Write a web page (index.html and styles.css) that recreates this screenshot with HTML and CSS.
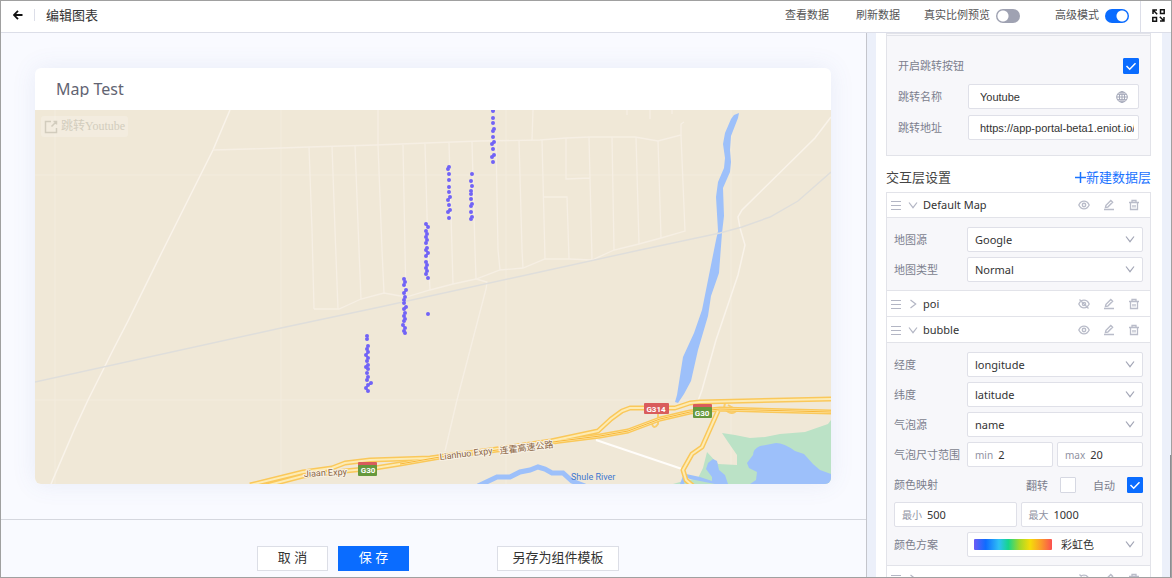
FILE: index.html
```html
<!DOCTYPE html>
<html lang="zh-CN">
<head>
<meta charset="utf-8">
<title>编辑图表</title>
<link rel="stylesheet" href="styles.css">
</head>
<body>
<svg class="defs" aria-hidden="true">
  <symbol id="i-drag" viewBox="0 0 10 10"><path d="M0 1.500h10M0 5.500h10M0 9.500h10" fill="none" stroke="currentColor"/></symbol>
  <symbol id="i-down" viewBox="0 0 10 10"><path d="M1 2.500l4 5.200 4-5.200" fill="none" stroke="currentColor" stroke-width="1.200"/></symbol>
  <symbol id="i-right" viewBox="0 0 10 10"><path d="M2.500 1l5.200 4-5.200 4" fill="none" stroke="currentColor" stroke-width="1.200"/></symbol>
  <symbol id="i-eye" viewBox="0 0 12 12"><path d="M.8 6C2 3.500 3.800 2.200 6 2.200S10 3.500 11.200 6C10 8.500 8.200 9.800 6 9.800S2 8.500.8 6z" fill="none" stroke="currentColor" stroke-width="1.300"/><circle cx="6" cy="6" r="1.700" fill="none" stroke="currentColor" stroke-width="1.400"/></symbol>
  <symbol id="i-eye-off" viewBox="0 0 12 12"><path d="M.8 6C2 3.500 3.800 2.200 6 2.200S10 3.500 11.200 6C10 8.500 8.200 9.800 6 9.800S2 8.500.8 6zM1.500 1.500l9 9" fill="none" stroke="currentColor" stroke-width="1.300"/><circle cx="6" cy="6" r="1.700" fill="none" stroke="currentColor" stroke-width="1.200"/></symbol>
  <symbol id="i-edit" viewBox="0 0 12 12"><path d="M2.500 8.500L3 6.300 7.800 1.500 9.600 3.300 4.800 8.100zM1 10.500h10" fill="none" stroke="currentColor" stroke-width="1.400"/></symbol>
  <symbol id="i-trash" viewBox="0 0 12 12"><path d="M1 3.500h10M2.500 3.500v7h7v-7M4 3.200V1.500h4v1.700M5 6v2.500M7 6v2.500" fill="none" stroke="currentColor" stroke-width="1.300"/></symbol>
</svg>
<div class="app">
  <header class="topbar">
    <button class="icon-btn back" aria-label="返回"><svg width="10" height="10" viewBox="0 0 10 10"><path d="M9.500 5H1.200M5 .8L1 5l4 4.200" fill="none" stroke="#111" stroke-width="1.800"/></svg></button>
    <h1 class="topbar-title">编辑图表</h1>
    <nav class="topbar-actions">
      <button class="link-btn">查看数据</button>
      <button class="link-btn">刷新数据</button>
      <label class="switch-label">真实比例预览<input class="switch" type="checkbox" role="switch"></label>
      <label class="switch-label advanced">高级模式<input class="switch" type="checkbox" role="switch" checked></label>
    </nav>
    <button class="icon-btn expand" aria-label="全屏"><svg width="13" height="13" viewBox="0 0 13 13" fill="none" stroke="#111" stroke-width="1.500"><path d="M8.500.8h3.700v3.700H8.500zM.8 8.500h3.700v3.700H.8zM1 5V1h4M1 1l4.200 4.200M12 8v4H8M12 12L7.800 7.800"/></svg></button>
  </header>

  <div class="workspace">
    <main class="editor">
      <section class="stage">
        <article class="card">
          <h2 class="card-title">Map Test</h2>
          <div class="map">
            <svg class="map-svg" viewBox="35 110 796 374" preserveAspectRatio="xMidYMid slice" role="img" aria-label="Map">
              <rect x="35" y="110" width="796" height="374" fill="#f0e8d7"/>
              <path class="tiles" d="M55 110V484M281 110V484M506 110V484M731 110V484M35 175H831M35 400H831"/>
              <path fill="#bbe2c6" d="M722 433L735 435 750 438 765 437 780 434 805 432 828 424 831 420V484H673L680 482 698 478 703 468 707 452 718 464 737 465V455L728 442z"/>
              <path fill="#9dc0fa" d="M831 474L820 470 813 464 804 454 795 451Q784 443 776 443L760 446Q753 449 753 455L747 463 749 468 757 472 756 480 750 484H831zM713 459L717 461 719 470 725 475 728 484H715L690 479 683 476 680 484H684L686 474 700 477 712 481 712 477 706 469 708 463z"/>
              <g class="roads">
                <path class="strong" d="M230 110L213 150 190 196 162 252 128 321 113 350 88 400 75 428 51 484"/>
                <path d="M213 150L281 148 309 147 376 145 426 143 480 141 540 140 566 138 590 137H635L658 141 681 135V124L684 122"/>
                <path d="M314 309H339L361 299 384 293 406 297 430 290 453 284 476 279 500 270 523 268 545 259H569L592 260 614 250 639 244 661 238 685 231 681 135"/>
                <path d="M309 147L312 230 314 309M332 146L335 230 338 309M355 145L359 250 361 299M378 110V145L382 250 384 293M403 145L405 250 406 297M425 144L428 250 430 290M449 143L452 250 453 284M472 142L475 250 476 279M496 141L498 250 500 270M519 140L522 250 523 268M542 140L545 259M566 138V179L590 178M544 197H567L569 259M589 137L592 260M612 137L614 250M636 137L639 244M658 141L661 238M533 110L532 140M627 110V115M650 110V119M672 110V114"/>
                <path d="M476 279L487 282 486 289 457 400 445 451"/>
                <path class="strong" d="M831 117L815 138 742 210 738 217 740 228 745 245 738 275 716 340 702 390 698 401"/>
              </g>
              <path fill="#9dc0fa" d="M739 113L738 118 731 136 730 150 731 162 730 172 723 188 724 216 722 233 719 273 711 296 708 316 698 350 691 381 684 394 678 403 675 402 677 395 683 357 694 333 702 310 709 275 716 240 718 231 716 197 718 182 724 168 725 158 723 144 725 133 731 119 734 115z"/>
              <path class="railway" d="M35 382L281 328 380 307 540 272 640 250 720 233 742 227 770 217 798 201 831 172"/>
              <path class="stream" d="M478 486L497 477H510L520 472 530 470 538 467 545 469 552 473H563L572 481 585 486"/>
              <path d="M596 440L682 469" stroke="#fffdfa" stroke-width="2"/>
              <path class="ramp" d="M658 409V424Q654 430 652 424M725 403L724 408Q732 417 737 410L728 405"/>
              <g class="hw hw-edge">
                <path d="M250 485L303 472 332 468 345 463 370 460 430 458 490 450 551 441 598 431 611 419 622 411 630 408H675L690 403 700 402 831 399"/>
                <path d="M265 486L303 476 345 471 375 468 400 464 440 457 490 451 560 441 600 436 628 431 660 419 690 412 720 409 831 412"/>
                <path d="M718 411L702 447 692 454 683 470 686 480 693 486"/>
              </g>
              <g class="hw hw-fill">
                <path d="M250 485L303 472 332 468 345 463 370 460 430 458 490 450 551 441 598 431 611 419 622 411 630 408H675L690 403 700 402 831 399"/>
                <path d="M265 486L303 476 345 471 375 468 400 464 440 457 490 451 560 441 600 436 628 431 660 419 690 412 720 409 831 412"/>
                <path d="M718 411L702 447 692 454 683 470 686 480 693 486"/>
              </g>
              <path class="hw-line" d="M400 464L440 457 490 451 560 441 600 436 628 431 660 419 690 412 720 409 831 412"/>
              <g class="bubbles">
                <path d="M493 111h0M493 118h0M493 123h0M494 129h0M493 131h0M493 137h0M494 142h0M492 144h0M493 149h0M494 155h0M492 157h0M493 162h0"/>
                <path d="M449 167h0M448 169h0M449 174h0M449 180h0M449 187h0M449 192h0M450 197h0M448 200h0M449 205h0M450 210h0M448 212h0M449 218h0"/>
                <path d="M472 174h0M471 181h0M472 186h0M471 191h0M471 194h0M471 199h0M472 204h0M471 206h0M471 212h0M472 217h0M471 219h0"/>
                <path d="M426 224h0M428 227h0M426 231h0M427 234h0M426 237h0M427 240h0M426 243h0M427 248h0M426 250h0M428 253h0M426 256h0M426 262h0M427 265h0M426 268h0M427 271h0M426 274h0M428 278h0"/>
                <path d="M404 279h0M405 282h0M404 285h0M406 290h0M404 293h0M405 297h0M404 300h0M404 303h0M406 307h0M404 309h0M405 313h0M404 316h0M405 319h0M404 321h0M403 325h0M405 328h0M404 331h0M405 333h0M428 314h0"/>
                <path d="M367 336h0M367 339h0M368 346h0M367 349h0M368 352h0M366 355h0M368 358h0M367 361h0M368 365h0M366 367h0M368 369h0M367 373h0M368 377h0M367 380h0M371 383h0M368 385h0M366 388h0M368 391h0"/>
              </g>
              <g class="road-label">
                <text transform="translate(304 477) rotate(-3)">Jiaan Expy</text>
                <text transform="translate(440 460) rotate(-7)">Lianhuo Expy</text>
                <text transform="translate(500 454) rotate(-7)">连霍高速公路</text>
              </g>
              <text class="river-label" x="571" y="480">Shule River</text>
              <g class="shield">
                <rect x="644" y="403" width="25" height="11" rx="1" fill="#d95c5c"/><text x="656" y="412">G314</text>
                <rect x="358" y="462" width="19" height="5" rx="1" fill="#d95c5c"/><rect x="358" y="465" width="19" height="11" rx="1" fill="#66983c"/><text x="368" y="473">G30</text>
                <rect x="693" y="404" width="19" height="5" rx="1" fill="#d95c5c"/><rect x="693" y="407" width="19" height="11" rx="1" fill="#66983c"/><text x="702" y="416">G30</text>
              </g>
            </svg>
            <button class="jump-btn"><svg width="14" height="14" viewBox="0 0 14 14" fill="none" stroke="currentColor" stroke-width="1.500"><path d="M7 1.500H1.500v11h11V8M9.500 1.500h3v3M12.500 1.500L7.500 6.500"/></svg>跳转Youtube</button>
          </div>
        </article>
      </section>
      <footer class="actions">
        <button class="btn">取 消</button>
        <button class="btn primary">保 存</button>
        <button class="btn template">另存为组件模板</button>
      </footer>
    </main>

    <aside class="sidebar">
      <div class="panel">
        <section class="jump-box">
          <div class="row"><label for="jump-on">开启跳转按钮</label><input class="check push" id="jump-on" type="checkbox" checked></div>
          <div class="row"><label for="jump-name">跳转名称</label>
            <div class="field wide"><input id="jump-name" type="text" value="Youtube"><svg class="globe" width="12" height="12" viewBox="0 0 12 12" fill="none" stroke="#a3a7b8"><circle cx="6" cy="6" r="5.300"/><ellipse cx="6" cy="6" rx="2.600" ry="5.300"/><path d="M6 .7v10.600M.7 6h10.600M1.500 3.300h9M1.500 8.700h9"/></svg></div></div>
          <div class="row"><label for="jump-url">跳转地址</label><div class="field wide url"><input id="jump-url" type="text" value="https://app-portal-beta1.eniot.io/"></div></div>
        </section>

        <div class="layers-head"><h3>交互层设置</h3><button class="add-btn"><svg width="11" height="11" viewBox="0 0 11 11"><path d="M5.500 0v11M0 5.500h11" stroke="currentColor" stroke-width="1.500"/></svg>新建数据层</button></div>

        <section class="layers">
          <div class="layer-head"><svg class="ic drag"><use href="#i-drag"/></svg><svg class="ic"><use href="#i-down"/></svg><h4>Default Map</h4>
            <button class="tool" aria-label="显示"><svg><use href="#i-eye"/></svg></button><button class="tool" aria-label="编辑"><svg><use href="#i-edit"/></svg></button><button class="tool" aria-label="删除"><svg><use href="#i-trash"/></svg></button></div>
          <div class="layer-body">
            <div class="row"><label for="src">地图源</label><div class="field"><select id="src"><option>Google</option></select><svg class="caret"><use href="#i-down"/></svg></div></div>
            <div class="row"><label for="type">地图类型</label><div class="field"><select id="type"><option>Normal</option></select><svg class="caret"><use href="#i-down"/></svg></div></div>
          </div>
          <div class="layer-head"><svg class="ic drag"><use href="#i-drag"/></svg><svg class="ic"><use href="#i-right"/></svg><h4>poi</h4>
            <button class="tool" aria-label="显示"><svg><use href="#i-eye-off"/></svg></button><button class="tool" aria-label="编辑"><svg><use href="#i-edit"/></svg></button><button class="tool" aria-label="删除"><svg><use href="#i-trash"/></svg></button></div>
          <div class="layer-head"><svg class="ic drag"><use href="#i-drag"/></svg><svg class="ic"><use href="#i-down"/></svg><h4>bubble</h4>
            <button class="tool" aria-label="显示"><svg><use href="#i-eye"/></svg></button><button class="tool" aria-label="编辑"><svg><use href="#i-edit"/></svg></button><button class="tool" aria-label="删除"><svg><use href="#i-trash"/></svg></button></div>
          <div class="layer-body">
            <div class="row"><label for="lng">经度</label><div class="field"><select id="lng"><option>longitude</option></select><svg class="caret"><use href="#i-down"/></svg></div></div>
            <div class="row"><label for="lat">纬度</label><div class="field"><select id="lat"><option>latitude</option></select><svg class="caret"><use href="#i-down"/></svg></div></div>
            <div class="row"><label for="bsrc">气泡源</label><div class="field"><select id="bsrc"><option>name</option></select><svg class="caret"><use href="#i-down"/></svg></div></div>
            <div class="row"><span class="label">气泡尺寸范围</span><div class="pair"><label class="field num">min<input type="text" value="2"></label><label class="field num">max<input type="text" value="20"></label></div></div>
            <div class="row"><span class="label">颜色映射</span><label class="inline push">翻转<input class="check" type="checkbox"></label><label class="inline">自动<input class="check" type="checkbox" checked></label></div>
            <div class="row"><div class="pair"><label class="field num">最小<input type="text" value="500"></label><label class="field num">最大<input type="text" value="1000"></label></div></div>
            <div class="row"><label for="scheme">颜色方案</label><div class="field"><span class="swatch"></span><select id="scheme"><option>彩虹色</option></select><svg class="caret"><use href="#i-down"/></svg></div></div>
          </div>
          <div class="layer-head"><svg class="ic drag"><use href="#i-drag"/></svg><svg class="ic"><use href="#i-right"/></svg><h4></h4>
            <button class="tool" aria-label="显示"><svg><use href="#i-eye-off"/></svg></button><button class="tool" aria-label="编辑"><svg><use href="#i-edit"/></svg></button><button class="tool" aria-label="删除"><svg><use href="#i-trash"/></svg></button></div>
        </section>
      </div>
      <span class="scroll-thumb"></span>
    </aside>
  </div>
</div>
</body>
</html>
```

FILE: styles.css
```css
* { box-sizing: border-box; }
body {
  margin: 0;
  font-family: "Noto Sans", "Noto Sans CJK SC", sans-serif;
  font-size: 11px;
  color: #333;
}
h1, h2, h3, h4 { margin: 0; font-weight: 400; }
button, input, select { font: inherit; color: inherit; margin: 0; }
button { padding: 0; border: 0; background: none; cursor: pointer; }
svg { display: block; flex: none; }
.defs { position: absolute; width: 0; height: 0; }

.app {
  display: flex;
  flex-direction: column;
  height: 100vh;
  overflow: hidden;
  border: 1px solid #a0a0a0;
  background: #f9faff;
}

.topbar {
  display: flex;
  align-items: center;
  flex: none;
  height: 32px;
  padding-bottom: 4px;
  background: #fff;
  border-bottom: 1px solid #dcdee8;
}
.icon-btn { display: flex; align-items: center; justify-content: center; }
.back { width: 34px; height: 12px; border-right: 1px solid #dcdee8; }
.topbar-title { margin-left: 11px; font-size: 13px; line-height: 20px; }
.topbar-actions { display: flex; align-items: center; gap: 27px; margin-left: auto; margin-right: 11px; }
.link-btn { color: #555; line-height: 16px; }
.switch-label { display: flex; align-items: center; gap: 6px; color: #555; line-height: 16px; }
.link-btn + .switch-label { margin-left: -3px; }
.advanced { margin-left: 8px; }
.switch {
  appearance: none;
  width: 24px;
  height: 14px;
  margin-top: 2px;
  border-radius: 7px;
  background: radial-gradient(circle at 7px 7px, #fff 5px, transparent 6px) #9fa2b2;
}
.switch:checked { background: radial-gradient(circle at 17px 7px, #fff 5px, transparent 6px) #0a6cff; }
.expand { align-self: flex-start; flex: none; width: 31px; height: 31px; padding: 0 0 2px 4px; border-left: 1px solid #dcdee8; }

.workspace { display: flex; flex: 1; min-height: 0; }
.editor { display: flex; flex-direction: column; flex: 1; min-width: 0; border-right: 1px solid #c4c5cc; }
.stage { display: flex; flex: 1; min-height: 0; padding: 35px 35px 35px 34px; }
.card {
  display: flex;
  flex-direction: column;
  flex: 1;
  overflow: hidden;
  border-radius: 6px;
  background: #fff;
  box-shadow: 0 0 24px rgba(80, 110, 180, .1);
}
.card-title {
  height: 29px;
  margin: 0 21px 13px;
  padding-top: 10px;
  overflow: hidden;
  color: #626472;
  font-size: 16px;
  line-height: 22px;
  flex: none;
}
.map { position: relative; flex: 1; min-height: 0; }
.map-svg { width: 100%; height: 100%; }
.jump-btn {
  position: absolute;
  top: 6px;
  left: 6px;
  display: flex;
  align-items: center;
  gap: 3px;
  padding: 0 3px;
  border-radius: 3px;
  background: rgba(255, 255, 255, .2);
  color: #d2ccbd;
  font: 12px/21px "Liberation Serif", "Noto Sans CJK SC", serif;
}
.tiles { fill: none; stroke: #f3ecde; }
.roads { fill: none; stroke: #f6efe4; stroke-width: 1.300; }
.strong { stroke: #f9f3ea; stroke-width: 1.500; }
.railway { fill: none; stroke: #dfdedb; stroke-width: 1.400; }
.stream { fill: none; stroke: #9dc0fa; stroke-width: 5; }
.ramp { fill: none; stroke: #f9cd6c; stroke-width: 2; }
.hw { fill: none; stroke-linejoin: round; }
.hw-edge { stroke: #fac85a; stroke-width: 5; }
.hw-fill { stroke: #fdebb4; stroke-width: 2; }
.hw-line { fill: none; stroke: #f8b637; stroke-width: 1; }
.bubbles { fill: none; stroke: #7163f6; stroke-width: 4; stroke-linecap: round; }
.road-label, .river-label { font-family: Roboto, "Noto Sans CJK SC", sans-serif; font-size: 9px; }
.road-label { fill: #8a6444; stroke: #f8f2e6; stroke-width: 2; paint-order: stroke; }
.river-label { fill: #3f77cf; }
.shield text { fill: #fff; font: 700 8px Roboto, sans-serif; text-anchor: middle; }

.actions {
  display: flex;
  gap: 10px;
  flex: none;
  height: 58px;
  padding: 26px 0 0 256px;
  border-top: 1px solid #d5d7de;
}
.btn { width: 71px; height: 25px; padding-bottom: 3px; border: 1px solid #dcdee6; background: #fff; font-size: 13px; line-height: 20px; }
.primary { border-color: #0a6cff; background: #0a6cff; color: #fff; }
.template { width: 122px; margin-left: 78px; }

.sidebar { position: relative; flex: 0 0 304px; padding: 0 9px; overflow: hidden; background: #ecf0fa; }
.panel { padding: 0 11px 0 10px; background: #fff; }
.scroll-thumb { position: absolute; right: 0; top: 422px; bottom: 0; width: 1px; background: #8c8d92; }
.jump-box {
  padding: 17px 11px 15px;
  border: 1px solid #e2e3e9;
  border-top: 3px double #e2e3e9;
  background: #f7f7fa;
  display: grid;
  gap: 6px;
}
.row { display: flex; align-items: center; height: 25px; color: #7c7f8e; }
.row > label:first-child, .label { flex: 0 0 auto; line-height: 16px; min-width: 73px; }
.jump-box .row > label:first-child { min-width: 70px; }
.row > .push, .push { margin-left: auto; }
.field {
  position: relative;
  display: flex;
  align-items: center;
  flex: 1;
  min-width: 0;
  height: 25px;
  border: 1px solid #dfe0e8;
  border-radius: 2px;
  background: #fff;
}
.field input, .field select {
  appearance: none;
  flex: 1;
  min-width: 0;
  width: 100%;
  height: 23px;
  padding: 0 7px;
  border: 0;
  background: none;
  color: #333;
}
.wide { padding: 0 10px 0 11px; }
.wide input { padding: 0; font-family: "Liberation Sans", sans-serif; }
.url { padding-right: 4px; }
.caret { position: absolute; right: 7px; top: 6px; width: 10px; height: 10px; color: #a3a6b6; pointer-events: none; }
.num { padding-left: 7px; color: #8f92a2; font-size: 10px; }
.num input { padding: 0 5px; font-size: 11px; }
.pair { display: flex; flex: 1; gap: 4px; min-width: 0; }
.check {
  appearance: none;
  width: 16px;
  height: 16px;
  border: 1px solid #d6d8e2;
  border-radius: 1px;
  background: #fff;
}
.check:checked {
  border-color: #0a6cff;
  background: #0a6cff url("data:image/svg+xml,%3Csvg xmlns='http://www.w3.org/2000/svg' viewBox='0 0 14 14'%3E%3Cpath d='M2.500 7l3.200 3.200L11.500 4.200' fill='none' stroke='white' stroke-width='1.500'/%3E%3C/svg%3E");
}
.inline { display: flex; align-items: center; gap: 12px; }
.inline + .inline { margin-left: 17px; }
.swatch {
  flex: none;
  width: 78px;
  height: 11px;
  margin: 0 2px 0 6px;
  border-radius: 1px;
  background: linear-gradient(90deg, #6c5cf5, #0f6cff 15%, #2fc0f5 32%, #16d58c 44%, #a0d82a 58%, #f5dc0a 72%, #fb9b2a 86%, #fb5050);
}

.layers-head { display: flex; justify-content: space-between; align-items: center; height: 36px; padding-top: 6px; }
.layers-head h3 { font-size: 13px; line-height: 18px; color: #444; }
.add-btn { display: flex; align-items: center; color: #1a73ff; font-size: 13px; line-height: 18px; }
.layers { border: 1px solid #e2e3e9; }
.layer-head { display: flex; align-items: center; height: 26px; padding: 0 10px 0 4px; border-bottom: 1px solid #e2e3e9; }
.layer-head:first-child { height: 25px; }
.layer-head h4 { flex: 1; margin-left: 5px; font-size: 11px; line-height: 16px; }
.ic { width: 10px; height: 10px; color: #b3b6c4; }
.drag { margin-right: 7px; }
.tool { margin-left: 13px; color: #b9bcc9; }
.tool svg { width: 12px; height: 12px; }
.layer-body { display: grid; gap: 5px; padding: 9px 7px 8px; background: #f7f7fa; border-bottom: 1px solid #e2e3e9; }
```
